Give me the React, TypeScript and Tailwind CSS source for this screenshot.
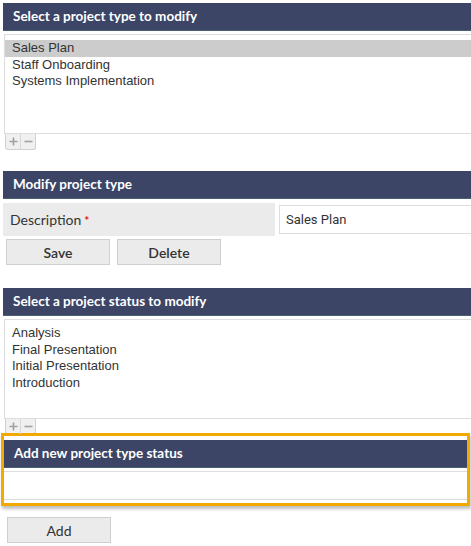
import type { ReactNode } from "react";

const lato = { fontFamily: "Lato, 'Open Sans', sans-serif" };

function SectionHeader({ children }: { children: ReactNode }) {
  return (
    <div className="flex h-[28px] items-center border-b border-[#4a6070] bg-[#3c4566] pl-[10px] text-[13.5px] font-bold text-white font-['Lato',sans-serif]">
      {children}
    </div>
  );
}

function ListBox({ items, selected }: { items: string[]; selected?: string }) {
  return (
    <div className="ml-[1px] h-[100px] border border-r-0 border-[#dddddd] pt-[5px] text-[13px] leading-[16.5px] text-[#333] font-['Liberation_Sans',Arial,sans-serif]">
      {items.map((it) => (
        <div
          key={it}
          className={`pl-[7px] ${it === selected ? "bg-[#cccccc]" : ""}`}
        >
          {it}
        </div>
      ))}
    </div>
  );
}

function PlusMinus() {
  return (
    <div className="ml-[5px] flex h-[16px] w-[31px] rounded-b-[3px] border border-t-0 border-[#d0d0d0] bg-[#f0f0f0] text-[#a0a0a0]">
      <div className="flex w-[15px] items-center justify-center border-r border-[#d8d8d8]">
        <svg width="9" height="9" viewBox="0 0 9 9">
          <path d="M4.5 0.5v8M0.5 4.5h8" stroke="#a0a0a0" strokeWidth="1.6" />
        </svg>
      </div>
      <div className="flex flex-1 items-center justify-center">
        <svg width="9" height="9" viewBox="0 0 9 9">
          <path d="M0.5 4.5h8" stroke="#a0a0a0" strokeWidth="1.6" />
        </svg>
      </div>
    </div>
  );
}

function Button({ children, bold }: { children: ReactNode; bold?: boolean }) {
  return (
    <button
      type="button"
      className={`h-[26px] w-[104px] border border-[#cfcfcf] bg-[#ebebeb] text-[14px] text-[#333] font-['Lato',sans-serif] ${bold ? "font-semibold" : ""}`}
    >
      {children}
    </button>
  );
}

export default function App() {
  return (
    <div className="relative h-[546px] w-[471px] overflow-hidden bg-white" style={lato}>
      <div className="ml-[3px] w-[480px] pt-[3px]">
        <SectionHeader>Select a project type to modify</SectionHeader>
        <div className="h-[3px]" />
        <ListBox
          items={["Sales Plan", "Staff Onboarding", "Systems Implementation"]}
          selected="Sales Plan"
        />
        <div className="-ml-[3px]">
          <PlusMinus />
        </div>

        <div className="mt-[21px]">
          <SectionHeader>Modify project type</SectionHeader>
        </div>
        <div className="mt-[4px] flex h-[33px] items-stretch">
          <div className="flex w-[272px] items-center bg-[#ebebeb] pl-[7px] text-[14px] text-[#333] font-['Lato',sans-serif]">
            Description
            <span className="ml-[3px] mt-[3px] text-[12px] font-bold text-[#d9212c]">*</span>
          </div>
          <div className="ml-[4px] mt-[2px] flex h-[29px] flex-1 items-center border border-[#dddddd] pl-[6px] text-[13px] text-[#333] font-['Roboto',sans-serif]">
            Sales Plan
          </div>
        </div>
        <div className="mt-[3px] flex gap-[7px] pl-[3px]">
          <Button bold>Save</Button>
          <Button bold>Delete</Button>
        </div>

        <div className="mt-[23px]">
          <SectionHeader>Select a project status to modify</SectionHeader>
        </div>
        <div className="h-[3px]" />
        <ListBox
          items={["Analysis", "Final Presentation", "Initial Presentation", "Introduction"]}
        />
        <div className="-ml-[3px]">
          <PlusMinus />
        </div>
      </div>

      <div className="ml-[1px] mt-[-2px] h-[73px] w-[469px] border-[3px] border-[#f2a900] pt-[4px] shadow-[1px_3px_3px_rgba(0,0,0,0.25)]">
        <SectionHeader>Add new project type status</SectionHeader>
        <div className="mt-[3px] h-[29px] border-y border-[#dddddd]" />
      </div>

      <div className="ml-[7px] mt-[11px]">
        <Button>Add</Button>
      </div>
    </div>
  );
}
